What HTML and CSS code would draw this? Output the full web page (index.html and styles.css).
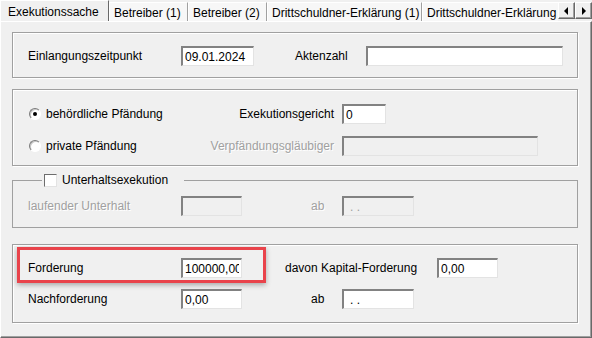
FILE: index.html
```html
<!DOCTYPE html>
<html lang="de">
<head>
  <meta charset="UTF-8" />
  <title>Exekutionssache</title>
  <link rel="stylesheet" href="styles.css">
</head>
<body>
  <div class="window">
    <div class="tabs">
      <div class="tab active">Exekutionssache</div>
      <div class="tab w-betr">Betreiber (1)</div>
      <div class="tab w-betr">Betreiber (2)</div>
      <div class="tab w-dritt">Drittschuldner-Erklärung (1)</div>
      <div class="tab last">Drittschuldner-Erklärung (2)</div>
      <div class="tab-scroll">
        <button class="arrow"><span class="tri left"></span></button>
        <button class="arrow"><span class="tri right"></span></button>
      </div>
    </div>

    <div class="panel">
      <!-- Einlangung -->
      <div class="group g1">
        <div class="row">
          <span class="lbl main">Einlangungszeitpunkt</span>
          <input class="field w73" value="09.01.2024">
          <span class="lbl akten">Aktenzahl</span>
          <input class="field w197" value="">
        </div>
      </div>

      <!-- Pfändung -->
      <div class="group g2">
        <div class="row">
          <span class="opt"><span class="radio checked"></span>behördliche Pfändung</span>
          <span class="lbl side">Exekutionsgericht</span>
          <input class="field w44" value="0">
        </div>
        <div class="row">
          <span class="opt"><span class="radio"></span>private Pfändung</span>
          <span class="lbl side off">Verpfändungsgläubiger</span>
          <input class="field w196" value="" disabled>
        </div>
      </div>

      <!-- Unterhalt -->
      <fieldset class="group g3">
        <legend><span class="check"></span>Unterhaltsexekution</legend>
        <div class="row">
          <span class="lbl main off">laufender Unterhalt</span>
          <input class="field w61" value="" disabled>
          <span class="lbl ab off">ab</span>
          <input class="field w72 dots" value=". ." disabled>
        </div>
      </fieldset>

      <!-- Forderung -->
      <div class="group g4">
        <div class="highlight"></div>
        <div class="row">
          <span class="lbl main">Forderung</span>
          <input class="field w61" value="100000,00">
          <span class="lbl kapital">davon Kapital-Forderung</span>
          <input class="field w61" value="0,00">
        </div>
        <div class="row">
          <span class="lbl main">Nachforderung</span>
          <input class="field w61" value="0,00">
          <span class="lbl ab">ab</span>
          <input class="field w72 dots" value=". .">
        </div>
      </div>
    </div>
  </div>
</body>
</html>
```

FILE: styles.css
```css
* { box-sizing: border-box; }
body {
  margin: 0;
  background: #f0f0f0;
  font-family: "Liberation Sans", Arial, sans-serif;
  font-size: 12px;
  color: #000;
}
.window { width: 592px; height: 338px; }

/* tab strip */
.tabs {
  display: flex; align-items: flex-end;
  height: 21px;
}
.tab {
  height: 19px;
  padding: 3px 0 0 4px;
  background: #f7f7f7;
  border-left: 1px solid #fff;
  border-top: 1px solid #fff;
  border-right: 1px solid #a0a0a0;
  white-space: nowrap;
  overflow: hidden;
}
.tab.active {
  height: 21px; width: 109px;
  padding: 4px 0 0 7px;
  background: #f0f0f0;
  border-right: 1px solid #696969;
}
.w-betr { width: 79px; }
.w-dritt { width: 155px; }
.tab.last { flex: 1; border-right: none; }
.tab-scroll {
  display: flex; align-self: flex-start;
  margin-top: 2px;
}
.arrow {
  width: 17px; height: 17px;
  padding: 0; margin: 0;
  background: #f0f0f0;
  border: 1px solid;
  border-color: #fff #696969 #696969 #fff;
  box-shadow: inset -1px -1px 0 #a0a0a0;
  display: flex; align-items: center; justify-content: center;
}
.tri { width: 0; height: 0; border-top: 4px solid transparent; border-bottom: 4px solid transparent; }
.tri.left { border-right: 4px solid #000; margin-right: 1px; }
.tri.right { border-left: 4px solid #000; margin-left: 1px; }

/* content panel */
.panel {
  height: 317px;
  padding: 10px 13px 0 11px;
  border-left: 1px solid #fff;
  border-top: 1px solid #fff;
  border-right: 1px solid #696969;
  border-bottom: 1px solid #696969;
  box-shadow: inset -1px -1px 0 #a0a0a0;
}
.group {
  border: 1px solid #a0a0a0;
  box-shadow: 1px 1px 0 #fff, inset 1px 1px 0 #fff;
  display: flex; flex-direction: column;
  position: relative;
}
.row { display: flex; align-items: center; height: 20px; }

.g1 { height: 46px; padding: 13px 0 0 15px; margin-bottom: 11px; }
.g2 { height: 77px; padding: 14px 0 0 16px; gap: 12px; margin-bottom: 7px; }
.g3 {
  margin: 0 0 16px; min-width: 0;
  height: 55px;
  padding: 9px 0 0 15px;
  box-shadow: none;
  display: block;
}
.g3 legend {
  padding: 0 16px 0 2px; margin-left: 14px;
  display: flex; align-items: center;
  height: 14px;
}
.g4 { height: 79px; padding: 13px 0 0 15px; gap: 11px; }

.lbl { white-space: nowrap; }
.lbl.main { width: 153px; }
.lbl.akten { margin-left: 41px; width: 71px; }
.lbl.side { width: 140px; text-align: right; padding-right: 8px; }
.lbl.ab { margin-left: 69px; width: 31px; }
.lbl.kapital { margin-left: 43px; width: 152px; }
.off { color: #a0a0a0; text-shadow: 1px 1px 0 #fff; }

.opt { display: flex; align-items: center; width: 173px; white-space: nowrap; }
.radio {
  width: 12px; height: 12px; margin-right: 5px;
  border-radius: 50%;
  background: #fff;
  border: 1px solid;
  border-color: #7a7a7a #fff #fff #7a7a7a;
  box-shadow: inset 1px 1px 0 #c8c8c8;
  position: relative;
}
.radio.checked::after {
  content: ""; position: absolute;
  left: 3px; top: 3px; width: 4px; height: 4px;
  border-radius: 50%; background: #000;
}
.check {
  width: 13px; height: 13px; margin-right: 5px;
  background: #fff;
  border: 1px solid;
  border-color: #6d6d6d #e3e3e3 #e3e3e3 #6d6d6d;
}

/* edit boxes */
.field {
  height: 20px;
  margin: 0;
  padding: 0 2px;
  font: inherit;
  color: #000;
  background: #fff;
  border-top: 2px solid #828282;
  border-left: 2px solid #828282;
  border-right: 1px solid #e3e3e3;
  border-bottom: 1px solid #e3e3e3;
  outline: none;
}
.field:disabled { background: #f0f0f0; color: #a0a0a0; }
.field.dots { padding-left: 6px; }
.w73 { width: 73px; }
.w197 { width: 197px; }
.w44 { width: 44px; }
.w196 { width: 196px; }
.w61 { width: 61px; }
.w72 { width: 72px; }

.highlight {
  position: absolute;
  left: 4px; top: 2px;
  width: 249px; height: 36px;
  border: 3px solid #e9434b;
  box-shadow: 0 2px 5px rgba(0, 0, 0, 0.3);
  pointer-events: none;
}
```
